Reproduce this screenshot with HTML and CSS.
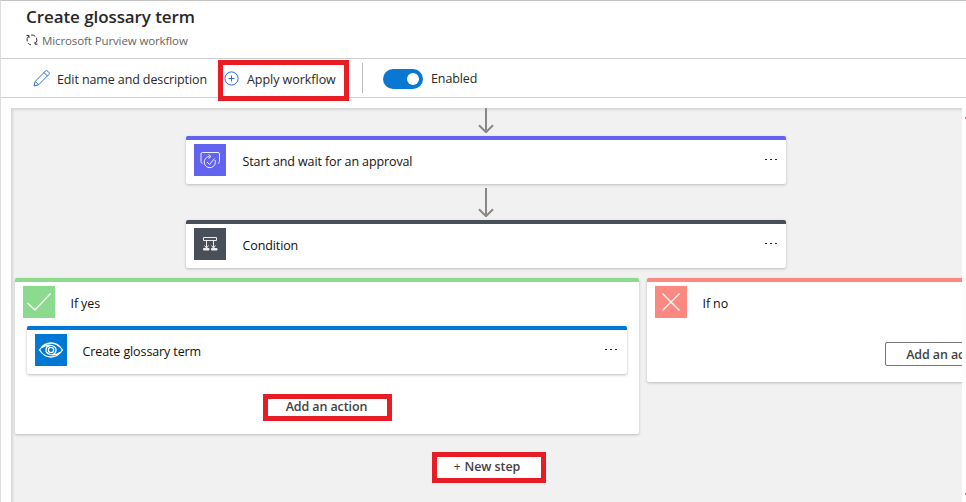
FILE: index.html
```html
<!DOCTYPE html>
<html lang="en">
<head>
<meta charset="utf-8">
<title>Create glossary term</title>
<link rel="stylesheet" href="styles.css">
</head>
<body>
<div class="app">
  <header class="header">
    <h1 class="title"><span>Create glossary term</span></h1>
    <div class="subtitle">
      <svg class="cycle" viewBox="0 0 12 12"><path d="M.5 1.500h2.500v2.500M2.600 2.200A5 5 0 0 0 1.200 7.500M2.200 9.300A5 5 0 0 0 5 10.900M5 1.100A5 5 0 0 1 9.400 2.300M10.500 3.800A5 5 0 0 1 9.300 9.500M11.500 10.200H9V7.800"/></svg>
      <span>Microsoft Purview workflow</span>
    </div>
  </header>
  <nav class="toolbar">
    <button class="tool edit">
      <svg class="pencil" viewBox="0 0 17 17"><path d="M1 16l1.200-4.600L12.300 1.300a1.800 1.800 0 0 1 2.600 0l.8.8a1.800 1.800 0 0 1 0 2.600L5.600 14.800zM2.200 11.400l3.400 3.400M11 2.600L14.400 6"/></svg>
      <span>Edit name and description</span>
    </button>
    <button class="tool apply marked">
      <svg class="plus" viewBox="0 0 15 15"><circle cx="7.500" cy="7.500" r="6.600"/><path d="M7.500 4.500v6M4.500 7.500h6"/></svg>
      <span>Apply workflow</span>
    </button>
    <div class="divider"></div>
    <div class="toggle"><i></i></div>
    <span class="enabled">Enabled</span>
  </nav>
  <div class="workspace">
    <main class="canvas">
      <svg class="arrow first" viewBox="0 0 16 25"><path d="M8 0v24M1 17.200l7 7 7-7"/></svg>
      <section class="card step purple">
        <div class="icon"><svg viewBox="0 0 32 32"><path d="M8.500 19.500q-1.500-.5-1.500-2V10q0-1.500 1.500-1.500h15.500q1.500 0 1.500 1.500v7.500q0 1.500-1.500 2"/><path d="M15.500 12.500a5.600 5.600 0 1 0 5.500 3.500M14.500 10.500l2.500 2-2.500 2M13 18l2.500 2.500 5-6"/></svg></div>
        <span class="label">Start and wait for an approval</span>
        <span class="more"><i></i><i></i><i></i></span>
      </section>
      <svg class="arrow" viewBox="0 0 16 29"><path d="M8 0v28M1 21.200l7 7 7-7"/></svg>
      <section class="card step dark">
        <div class="icon"><svg viewBox="0 0 32 32"><path d="M9.500 9.500h13v3h-13zM12.500 12.500v8M19.500 12.500v8M10.500 17.500l2 2.500 2-2.500M17.500 17.500l2 2.500 2-2.500"/><path class="solid" d="M9.500 20.500h5.500v1.500h-5.500zM17.500 20.500h5.500v1.500h-5.500z"/></svg></div>
        <span class="label">Condition</span>
        <span class="more"><i></i><i></i><i></i></span>
      </section>
      <div class="branches">
        <section class="card branch yes">
          <div class="branch-head">
            <div class="icon"><svg class="mark" viewBox="0 0 32 32"><path d="M4.500 17l7.500 7L27.500 7.500"/></svg></div>
            <span class="label">If yes</span>
          </div>
          <div class="card nested">
            <div class="icon"><svg class="eye" viewBox="0 0 32 32"><path d="M4.500 16Q9 9 16 9t11.500 7Q23 23 16 23T4.500 16z"/><path d="M7 13.500Q12 10 17 11.500q4.500 1.500 4 5-.5 3.500-4 4.500M25 18.500Q20 22 15 20.500q-4.500-1.500-4-5 .5-3.500 4-4"/><circle cx="16" cy="16" r="2.600"/></svg></div>
            <span class="label">Create glossary term</span>
            <span class="more"><i></i><i></i><i></i></span>
          </div>
          <button class="action marked"><span>Add an action</span></button>
        </section>
        <section class="card branch no">
          <div class="branch-head">
            <div class="icon"><svg class="mark" viewBox="0 0 32 32"><path d="M7.500 7.500l17 17M24.500 7.500l-17 17"/></svg></div>
            <span class="label">If no</span>
          </div>
          <button class="outline"><span>Add an action</span></button>
        </section>
      </div>
      <button class="new-step marked"><small>+</small><span>New step</span></button>
    </main>
    <div class="rail"><i></i><i></i></div>
  </div>
</div>
</body>
</html>
```
FILE: styles.css
```css
* { box-sizing: border-box; }
body {
  margin: 0;
  background: #fff;
  color: #292827;
  font: 12.5px/18px "Open Sans", "Noto Sans", sans-serif;
  letter-spacing: -.11px;
}
button { margin: 0; padding: 0; border: 0; background: none; color: inherit; font: inherit; letter-spacing: inherit; }
svg { display: block; fill: none; flex: none; }
.app {
  width: 966px;
  height: 502px;
  overflow: hidden;
  border-top: 1px solid #c4c4c4;
  border-left: 1px solid #ddd;
}
.header { height: 58px; padding: 3px 0 0 25px; border-bottom: 1px solid #cdcdcd; }
.title { margin: 0; font-size: 17px; line-height: 25px; font-weight: 600; letter-spacing: -.08px; }
.subtitle { display: flex; gap: 4px; align-items: center; height: 23px; color: #666; font-size: 11.5px; }
.cycle { width: 12px; height: 12px; margin-top: -2px; stroke: #333; }
.toolbar { display: flex; height: 39px; border-bottom: 1px solid #d0d0d0; overflow: visible; }
.tool { display: flex; align-items: center; height: 41px; white-space: nowrap; }
.edit { width: 217px; padding-left: 32px; gap: 7px; }
.pencil { width: 17px; height: 17px; stroke: #316fc6; margin-top: -3px; }
.marked { border: 5px solid #e81c24; }
.apply { width: 131px; height: 41px; margin-top: 1px; gap: 8px; padding-left: 1px; position: relative; }
.apply span { margin-top: -2px; letter-spacing: -.04px; }
.plus { width: 15px; height: 15px; stroke: #316fc6; margin-top: -5px; }
.divider { width: 1px; height: 30px; margin: 4px 20px 0 13px; background: #bbb; }
.toggle { width: 40px; height: 20px; margin-top: 10px; padding: 4px; border-radius: 10px; background: #0878d2; }
.toggle i { display: block; width: 12px; height: 12px; margin-left: 20px; border-radius: 50%; background: #fff; }
.enabled { margin: 11px 0 0 8px; }
.workspace { display: flex; margin: 10px 0 0 10px; }
.canvas {
  width: 951px;
  height: 394px;
  overflow: hidden;
  background: #f1f1f1;
  box-shadow: inset 2px 2px 2px #d7d7d7;
}
.rail { width: 4px; height: 394px; padding: 9px 0 0 3px; background: #fdfdfd; }
.rail i { display: block; width: 1px; height: 2px; margin-bottom: 374px; background: #a99b89; }
.arrow { width: 16px; height: 29px; margin: 4px 0 3px 467px; stroke: #8a8886; stroke-width: 2; }
.arrow.first { height: 25px; margin: 0 0 3px 467px; }
.card { background: #fff; border-radius: 2px; box-shadow: 0 1px 3px #bbb; }
.step { display: flex; width: 600px; height: 48px; margin-left: 175px; padding: 4px 9px 0 8px; border-top: 4px solid #6264ef; }
.icon { width: 32px; height: 32px; flex: none; background: #6264ef; }
.icon svg { width: 32px; height: 32px; stroke: #fff; stroke-width: 1; }
.purple .icon svg, .dark .icon svg { opacity: .9; }
.dark { border-color: #484f58; }
.dark .icon { background: #484f58; }
.icon .solid { fill: #fff; }
.icon .mark { stroke-width: 1.5; opacity: .9; }
.icon .eye { stroke-width: 1.3; }
.label { margin: 9px 0 0 16.5px; color: #111; white-space: nowrap; }
.branch .label { margin-left: 15.5px; }
.more { display: flex; gap: 3px; margin: 15px 0 0 auto; }
.more i { width: 2px; height: 1px; background: #222; }
.branches { display: flex; align-items: flex-start; gap: 8px; width: 1260px; margin: 10px 0 0 4px; }
.branch { width: 624px; border-top: 4px solid #8bda8e; padding: 4px 0 0 8px; }
.yes { height: 156px; }
.no { height: 104px; border-color: #fb8981; }
.branch-head { display: flex; }
.yes .branch-head .icon { background: #8bda8e; }
.no .icon { background: #fb8981; }
.nested { display: flex; width: 600px; height: 48px; margin: 8px 0 0 4px; padding: 4px 10px 0 8px; border-top: 4px solid #0078d4; }
.nested .icon { background: #0078d4; }
.action, .outline, .new-step { font-weight: 600; letter-spacing: -.1px; color: #444342; }
.action { display: block; width: 129px; height: 27px; margin: 20px 0 0 240px; padding-right: 2px; line-height: 14px; }
.action span { display: block; margin-top: -1px; }
.outline { display: block; width: 129px; height: 24px; margin: 24px 0 0 230px; padding-right: 5px; border: 1px solid #777; border-radius: 2px; line-height: 23px; }
.new-step { display: flex; justify-content: center; gap: 4px; width: 114px; height: 31px; margin: 18px 0 0 421px; padding-right: 4px; background: #fff; line-height: 20px; }
.new-step small { font-size: 12px; font-weight: 400; }
```
